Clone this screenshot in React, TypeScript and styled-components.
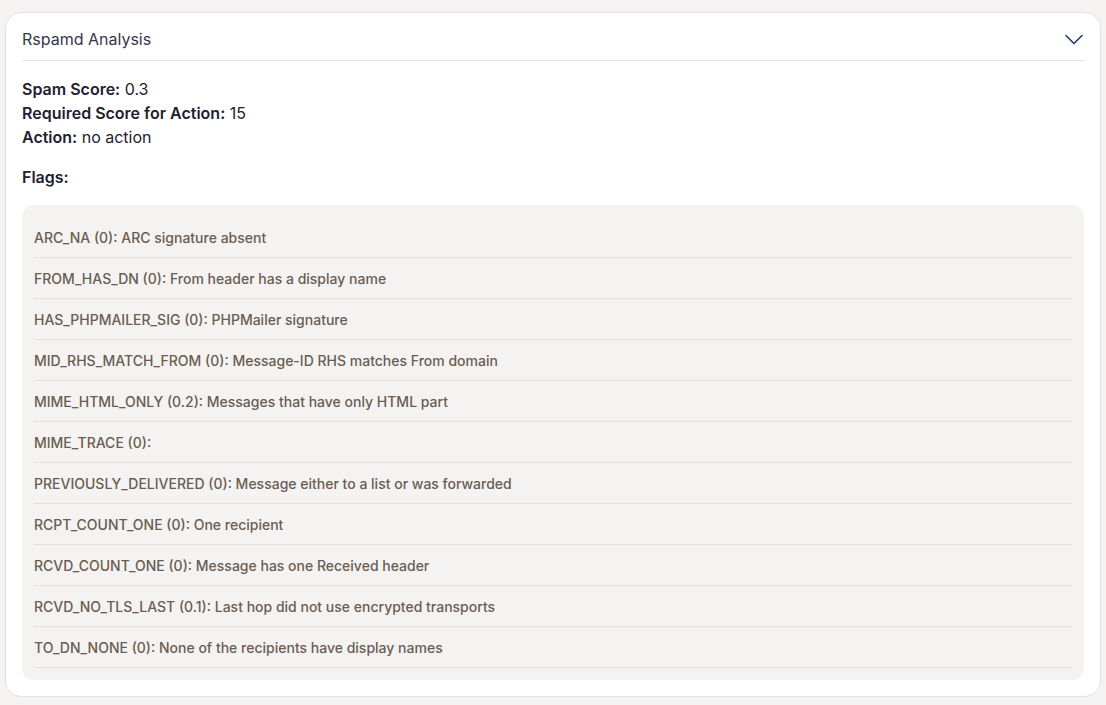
import styled, { createGlobalStyle } from 'styled-components';

const GlobalStyle = createGlobalStyle`
  * {
    box-sizing: border-box;
  }

  body {
    margin: 0;
    background-color: #f4f3f1;
    font-family: Inter, 'Noto Sans', sans-serif;
  }
`;

const Page = styled.div`
  padding: 12px 5px 8px 5px;
`;

const Card = styled.section`
  width: 100%;
  background-color: #ffffff;
  border: 1px solid #e1e1e6;
  border-radius: 16px;
  padding: 14px 16px 16px 16px;
`;

const CardHeader = styled.div`
  display: flex;
  flex-direction: row;
  align-items: center;
  justify-content: space-between;
  padding-bottom: 9px;
  border-bottom: 1px solid #e4e4e8;
`;

const Title = styled.h2`
  margin: 0;
  font-size: 16px;
  line-height: 24px;
  font-weight: 400;
  color: #35364a;
`;

const ToggleButton = styled.button`
  display: flex;
  align-items: center;
  justify-content: center;
  border: none;
  background: none;
  padding: 0;
  margin-right: 1px;
  cursor: pointer;
`;

const Summary = styled.div`
  padding-top: 16px;
  display: flex;
  flex-direction: column;
`;

const SummaryLine = styled.div`
  font-size: 16px;
  line-height: 24px;
  color: #1f2030;
`;

const Label = styled.span`
  font-weight: 600;
`;

const FlagsHeading = styled.div`
  margin-top: 16px;
  font-size: 16px;
  line-height: 24px;
  font-weight: 600;
  color: #1f2030;
`;

const FlagsBox = styled.ul`
  list-style: none;
  margin: 16px 0 0 0;
  padding: 12px;
  background-color: #f4f3f1;
  border-radius: 12px;
`;

const FlagRow = styled.li`
  height: 41px;
  display: flex;
  align-items: center;
  border-bottom: 1px solid #e3e1de;
  font-size: 14px;
  font-weight: 500;
  color: #6b5c52;
`;

const flags = [
  'ARC_NA (0): ARC signature absent',
  'FROM_HAS_DN (0): From header has a display name',
  'HAS_PHPMAILER_SIG (0): PHPMailer signature',
  'MID_RHS_MATCH_FROM (0): Message-ID RHS matches From domain',
  'MIME_HTML_ONLY (0.2): Messages that have only HTML part',
  'MIME_TRACE (0):',
  'PREVIOUSLY_DELIVERED (0): Message either to a list or was forwarded',
  'RCPT_COUNT_ONE (0): One recipient',
  'RCVD_COUNT_ONE (0): Message has one Received header',
  'RCVD_NO_TLS_LAST (0.1): Last hop did not use encrypted transports',
  'TO_DN_NONE (0): None of the recipients have display names',
];

const ChevronDown = () => (
  <svg width="18" height="11" viewBox="0 0 18 11" fill="none">
    <path d="M1 1.5L9 9.5L17 1.5" stroke="#1d3b72" strokeWidth="1.6" strokeLinecap="round" strokeLinejoin="round" />
  </svg>
);

const App = () => {
  return (
    <Page>
      <GlobalStyle />
      <Card>
        <CardHeader>
          <Title>Rspamd Analysis</Title>
          <ToggleButton aria-label="Collapse">
            <ChevronDown />
          </ToggleButton>
        </CardHeader>
        <Summary>
          <SummaryLine>
            <Label>Spam Score:</Label> 0.3
          </SummaryLine>
          <SummaryLine>
            <Label>Required Score for Action:</Label> 15
          </SummaryLine>
          <SummaryLine>
            <Label>Action:</Label> no action
          </SummaryLine>
        </Summary>
        <FlagsHeading>Flags:</FlagsHeading>
        <FlagsBox>
          {flags.map((flag) => (
            <FlagRow key={flag}>{flag}</FlagRow>
          ))}
        </FlagsBox>
      </Card>
    </Page>
  );
};

export default App;
